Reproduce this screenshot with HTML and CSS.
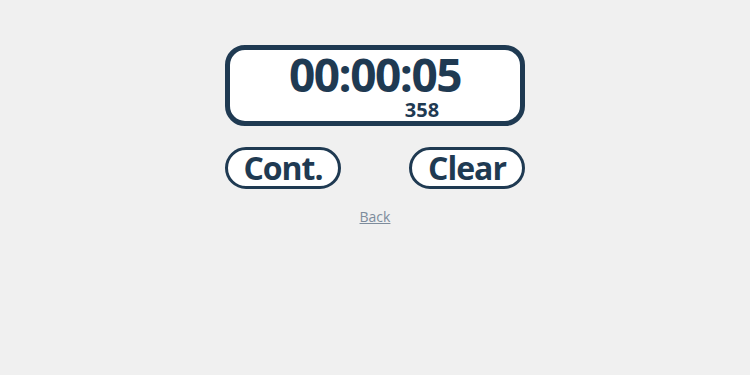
FILE: index.html
```html
<!DOCTYPE html>
<html>
<head>
<meta charset="utf-8">
<link rel="stylesheet" href="styles.css">
</head>
<body>
<main class="page">
  <div class="timer">
    <div class="time">00:00:05</div>
    <div class="ms">358</div>
  </div>
  <div class="buttons">
    <button class="btn">Cont.</button>
    <button class="btn">Clear</button>
  </div>
  <a class="back" href="#">Back</a>
</main>
</body>
</html>
```
FILE: styles.css
```css
html, body {
  margin: 0;
  padding: 0;
  background: #f0f0f0;
}
body {
  font-family: "Open Sans", "Noto Sans", sans-serif;
  color: #1f3a52;
}
.page {
  display: flex;
  flex-direction: column;
  align-items: center;
  padding-top: 45px;
}
.timer {
  box-sizing: border-box;
  width: 300px;
  height: 81px;
  border: 5px solid #1f3a52;
  border-radius: 20px;
  background: #ffffff;
  padding: 1px 0;
  display: flex;
  flex-direction: column;
  align-items: center;
}
.time {
  font-size: 46px;
  line-height: 46px;
  font-weight: 700;
  letter-spacing: -1.5px;
}
.ms {
  margin-top: 3px;
  font-size: 20px;
  line-height: 20px;
  font-weight: 700;
  padding-left: 94px;
}
.buttons {
  width: 300px;
  margin-top: 21px;
  display: flex;
  justify-content: space-between;
}
.btn {
  box-sizing: border-box;
  width: 116px;
  height: 42px;
  border: 3px solid #1f3a52;
  border-radius: 21px;
  background: #ffffff;
  color: #1f3a52;
  font-family: "Open Sans", "Noto Sans", sans-serif;
  font-size: 32px;
  line-height: 36px;
  font-weight: 700;
  letter-spacing: -1px;
  padding: 0;
  margin: 0;
}
.back {
  margin-top: 18px;
  font-size: 14px;
  line-height: 19px;
  color: #7d8c9c;
  text-decoration: underline;
}
```
